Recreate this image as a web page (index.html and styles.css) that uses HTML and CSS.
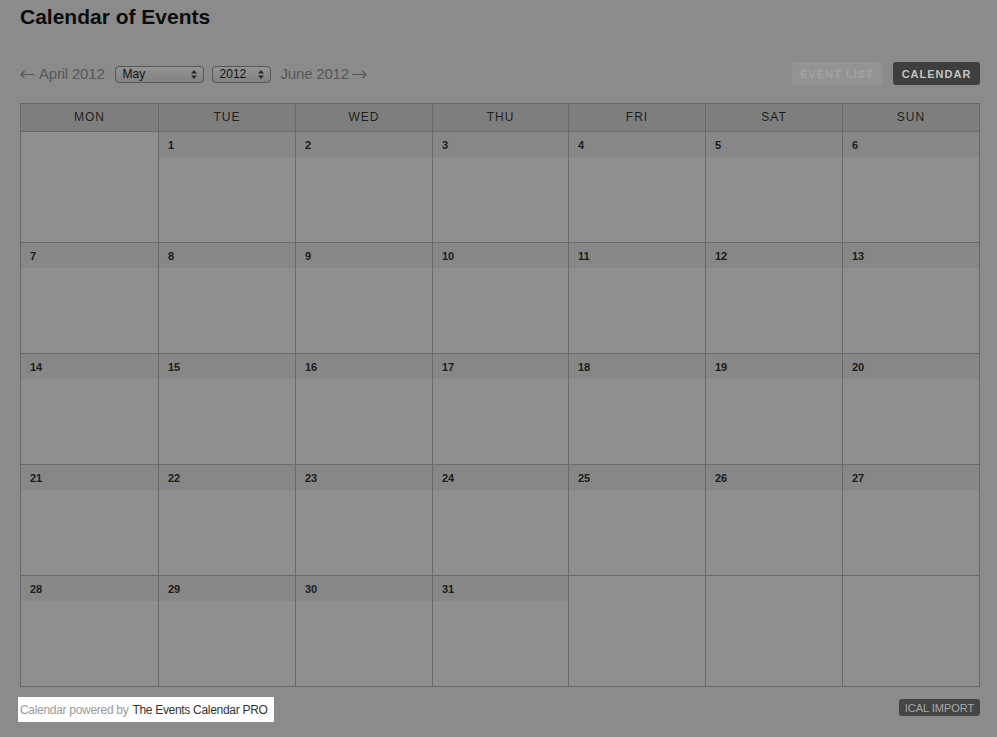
FILE: index.html
```html
<!DOCTYPE html>
<html>
<head>
<meta charset="utf-8">
<link rel="stylesheet" href="styles.css">
</head>
<body>
<div class="page">
  <h1 class="title">Calendar of Events</h1>
  <div class="nav">
    <div class="nav-left">
      <span class="nav-link"><svg class="arr arr-l" width="15" height="9" viewBox="0 0 15 9"><path d="M14.5 4.5 H1 M4.5 1 L1 4.5 L4.5 8" fill="none" stroke="#575757" stroke-width="1.2"/></svg>April 2012</span>
      <div class="select select-month"><span>May</span><svg class="arrows" width="6" height="9" viewBox="0 0 6 9"><path d="M3 0 L6 3.5 H0 Z M3 9 L6 5.5 H0 Z" fill="#2a2a2a"/></svg></div>
      <div class="select select-year"><span>2012</span><svg class="arrows" width="6" height="9" viewBox="0 0 6 9"><path d="M3 0 L6 3.5 H0 Z M3 9 L6 5.5 H0 Z" fill="#2a2a2a"/></svg></div>
      <span class="nav-link">June 2012<svg class="arr arr-r" width="15" height="9" viewBox="0 0 15 9"><path d="M0.5 4.5 H14 M10.5 1 L14 4.5 L10.5 8" fill="none" stroke="#575757" stroke-width="1.2"/></svg></span>
    </div>
    <div class="nav-right">
      <span class="btn btn-list">EVENT LIST</span>
      <span class="btn btn-cal">CALENDAR</span>
    </div>
  </div>
  <div class="cal">
    <div class="wd">MON</div><div class="wd">TUE</div><div class="wd">WED</div><div class="wd">THU</div><div class="wd">FRI</div><div class="wd">SAT</div><div class="wd">SUN</div>
    <div class="day empty"></div>
    <div class="day"><div class="num">1</div></div>
    <div class="day"><div class="num">2</div></div>
    <div class="day"><div class="num">3</div></div>
    <div class="day"><div class="num">4</div></div>
    <div class="day"><div class="num">5</div></div>
    <div class="day"><div class="num">6</div></div>
    <div class="day"><div class="num">7</div></div>
    <div class="day"><div class="num">8</div></div>
    <div class="day"><div class="num">9</div></div>
    <div class="day"><div class="num">10</div></div>
    <div class="day"><div class="num">11</div></div>
    <div class="day"><div class="num">12</div></div>
    <div class="day"><div class="num">13</div></div>
    <div class="day"><div class="num">14</div></div>
    <div class="day"><div class="num">15</div></div>
    <div class="day"><div class="num">16</div></div>
    <div class="day"><div class="num">17</div></div>
    <div class="day"><div class="num">18</div></div>
    <div class="day"><div class="num">19</div></div>
    <div class="day"><div class="num">20</div></div>
    <div class="day"><div class="num">21</div></div>
    <div class="day"><div class="num">22</div></div>
    <div class="day"><div class="num">23</div></div>
    <div class="day"><div class="num">24</div></div>
    <div class="day"><div class="num">25</div></div>
    <div class="day"><div class="num">26</div></div>
    <div class="day"><div class="num">27</div></div>
    <div class="day"><div class="num">28</div></div>
    <div class="day"><div class="num">29</div></div>
    <div class="day"><div class="num">30</div></div>
    <div class="day"><div class="num">31</div></div>
    <div class="day empty"></div>
    <div class="day empty"></div>
    <div class="day empty"></div>
  </div>
  <div class="footer">
    <div class="powered"><span class="pw-light">Calendar powered by</span><span class="pw-dark">The Events Calendar PRO</span></div>
    <span class="ical">ICAL IMPORT</span>
  </div>
</div>
</body>
</html>
```
FILE: styles.css
```css
html, body {
  margin: 0;
  padding: 0;
  background: #8b8b8b;
  font-family: "Liberation Sans", Arial, sans-serif;
}
.page {
  width: 960px;
  padding: 5px 17px 0 20px;
}
.title {
  margin: 0;
  font-size: 21px;
  line-height: 24px;
  font-weight: bold;
  color: #0c0c0c;
}
.nav {
  margin-top: 33px;
  height: 23px;
  display: flex;
  justify-content: space-between;
  align-items: center;
}
.nav-left {
  display: flex;
  align-items: center;
}
.nav-link {
  display: flex;
  align-items: center;
  font-size: 15px;
  color: #575757;
  letter-spacing: -0.2px;
}
.arr {
  display: block;
  margin-top: 1px;
}
.arr-l {
  margin-right: 4px;
}
.arr-r {
  margin-left: 3px;
}
.select {
  box-sizing: border-box;
  height: 17px;
  border: 1px solid #585858;
  border-radius: 4px;
  background: linear-gradient(#939393, #828282);
  display: flex;
  align-items: center;
  justify-content: space-between;
  padding: 0 6px 0 7px;
  font-size: 12px;
  color: #111;
  margin-top: 1px;
}
.select-month {
  width: 89px;
  margin-left: 10px;
}
.select-year {
  width: 59px;
  margin-left: 8px;
  margin-right: 10px;
}
.arrows {
  display: block;
}
.nav-right {
  display: flex;
  gap: 11px;
}
.btn {
  box-sizing: border-box;
  height: 23px;
  display: flex;
  align-items: center;
  justify-content: center;
  font-size: 11px;
  font-weight: bold;
  letter-spacing: 1px;
  border-radius: 3px;
}
.btn-list {
  width: 90px;
  background: #939393;
  color: #a2a2a2;
}
.btn-cal {
  width: 87px;
  background: #3e3e3e;
  color: #c4c4c4;
}
.cal {
  margin-top: 18px;
  box-sizing: border-box;
  width: 960px;
  padding: 1px;
  gap: 1px;
  background: #6a6a6a;
  display: grid;
  grid-template-columns: 137px 136px 136px 135px 136px 136px 136px;
  grid-template-rows: 27px repeat(5, 110px);
}
.wd {
  background: #7e7e7e;
  display: flex;
  align-items: center;
  justify-content: center;
  font-size: 12px;
  letter-spacing: 1px;
  color: #1e1e1e;
  padding-bottom: 1px;
}
.day {
  background: #8f8f8f;
}
.num {
  height: 25px;
  background: #878787;
  font-size: 11px;
  font-weight: bold;
  color: #1c1c1c;
  padding-left: 9px;
  display: flex;
  align-items: center;
}
.footer {
  margin-top: 10px;
  display: flex;
  justify-content: space-between;
  align-items: flex-start;
}
.powered {
  margin-left: -2px;
  height: 25px;
  background: #ffffff;
  padding: 0 6px 0 2px;
  display: flex;
  align-items: center;
  gap: 4px;
  font-size: 12px;
  letter-spacing: -0.3px;
}
.pw-light {
  color: #9a9a9a;
}
.pw-dark {
  color: #333333;
}
.ical {
  margin-top: 2px;
  box-sizing: border-box;
  width: 81px;
  height: 17px;
  background: #454545;
  color: #a9a9a9;
  font-size: 11px;
  border-radius: 3px;
  display: flex;
  align-items: center;
  justify-content: center;
}
```
